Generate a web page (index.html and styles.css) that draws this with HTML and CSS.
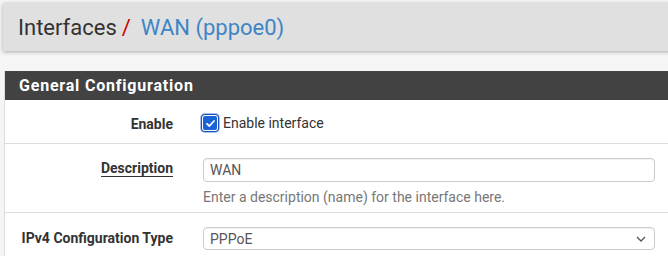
FILE: index.html
```html
<!DOCTYPE html>
<html>

<head>
    <meta charset="UTF-8">
    <title>Interfaces / WAN</title>
    <link rel="stylesheet" href="styles.css">
</head>

<body>
    <div class="page">
        <div class="crumbs">
            <span class="crumb">Interfaces</span>
            <span class="sep">/</span>
            <span class="crumb current">WAN (pppoe0)</span>
        </div>

        <div class="panel">
            <div class="panel-head">General Configuration</div>

            <div class="row row-check">
                <div class="label">Enable</div>
                <div class="field">
                    <label class="check">
                        <span class="box">
                            <svg width="11" height="11" viewBox="0 0 11 11">
                                <path d="M2 5.8 L4.4 8 L9 3" fill="none" stroke="#fff" stroke-width="1.8" stroke-linecap="round" stroke-linejoin="round"/>
                            </svg>
                        </span>
                        Enable interface
                    </label>
                </div>
            </div>

            <div class="row row-desc">
                <div class="label"><span class="hint">Description</span></div>
                <div class="field">
                    <div class="input">WAN</div>
                    <div class="help">Enter a description (name) for the interface here.</div>
                </div>
            </div>

            <div class="row">
                <div class="label">IPv4 Configuration Type</div>
                <div class="field">
                    <div class="input select">
                        PPPoE
                        <svg class="caret" width="10" height="6" viewBox="0 0 10 6">
                            <path d="M1 1 L5 5 L9 1" fill="none" stroke="#555" stroke-width="1.3"/>
                        </svg>
                    </div>
                </div>
            </div>
        </div>
    </div>
</body>
</html>
```

FILE: styles.css
```css
* {
    margin: 0;
    padding: 0;
    box-sizing: border-box;
}

body {
    background: #f5f5f5;
    font-family: Roboto, "Liberation Sans", sans-serif;
    font-size: 14px;
    color: #333;
    overflow: hidden;
}

.page {
    width: 690px;
    padding: 3px 0 0 3px;
}

.crumbs {
    height: 48px;
    background: #e0e0e0;
    box-shadow: 0 1px 4px rgba(0, 0, 0, .3);
    display: flex;
    align-items: center;
    padding-left: 15px;
    font-size: 22px;
}

.crumb {
    color: #333;
}

.sep {
    color: #c00;
    margin: 0 10px 0 5px;
}

.crumb.current {
    color: #3d85c6;
}

.panel {
    margin: 20px 0 0 1px;
    background: #fff;
    border-left: 1px solid #ddd;
}

.panel-head {
    height: 29px;
    background: #424242;
    color: #fff;
    font-weight: bold;
    font-size: 16px;
    letter-spacing: .8px;
    padding-left: 14px;
    display: flex;
    align-items: center;
}

.row {
    display: grid;
    grid-template-columns: 183px 1fr;
    border-bottom: 1px solid #ddd;
    padding: 14px 0 6px;
}

.row-check {
    padding: 13px 0 9px;
}

.row-desc {
    padding: 14px 0 5px;
}

.label {
    text-align: right;
    font-weight: bold;
    padding: 1px 15px 0 0;
    line-height: 20px;
}

.row-desc .label {
    padding-top: 0;
}

.hint {
    border-bottom: 1px solid #333;
}

.field {
    padding: 0 15px;
    width: 482px;
}

.check {
    display: flex;
    align-items: center;
    gap: 6px;
    height: 20px;
}

.box {
    width: 14px;
    height: 14px;
    border-radius: 2px;
    background: #1a62d8;
    box-shadow: 0 0 0 1px #fff, 0 0 0 2px #1a4fb8, 0 0 0 3px #a9c1ee;
    display: flex;
    align-items: center;
    justify-content: center;
}

.input {
    height: 24px;
    border: 1px solid #ccc;
    border-radius: 4px;
    padding: 0 6px;
    color: #555;
    display: flex;
    align-items: center;
    box-shadow: inset 0 1px 1px rgba(0, 0, 0, .06);
}

.select {
    height: 23px;
    justify-content: space-between;
    padding-right: 8px;
}

.help {
    color: #777;
    padding-top: 5px;
    line-height: 20px;
}
```
